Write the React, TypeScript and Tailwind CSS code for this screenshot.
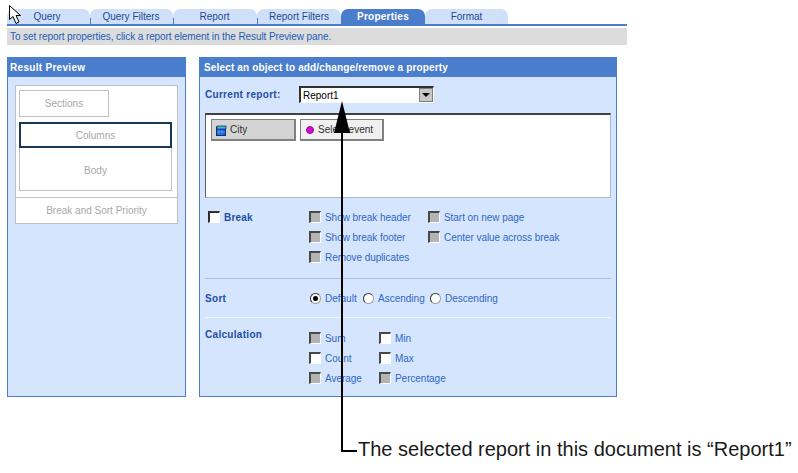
import React from 'react';

const tabs = ['Query', 'Query Filters', 'Report', 'Report Filters', 'Properties', 'Format'];
const tabWidths = ['w-[83px]', 'w-[83px]', 'w-[84px]', 'w-[84px]', 'w-[84px]', 'w-[83px]'];
const tabPads = ['pr-[3px]', 'pr-[1px]', 'pr-[1px]', '', 'pr-0', ''];

const Check: React.FC<{ label: string; off?: boolean; className?: string }> = ({ label, off, className }) => (
  <div className={`flex items-center h-[20px] ${className ?? ''}`}>
    <span
      className={`w-[12px] h-[12px] shrink-0 border-t-2 border-l-2 border-r border-b border-t-[#484848] border-l-[#484848] border-r-white border-b-white ${
        off ? 'bg-[#b4b4b4]' : 'bg-white'
      }`}
    />
    <span className="ml-[4px] text-[10px] tracking-[-0.05px] text-[#2f67c6] whitespace-nowrap">{label}</span>
  </div>
);

const Radio: React.FC<{ label: string; on?: boolean; className?: string }> = ({ label, on, className }) => (
  <div className={`flex items-center h-[20px] ${className ?? ''}`}>
    <span className="w-[11px] h-[11px] shrink-0 rounded-full border border-t-[#303030] border-l-[#303030] border-r-[#a0a0a0] border-b-[#a0a0a0] bg-white flex items-center justify-center">
      {on && <span className="w-[5px] h-[5px] rounded-full bg-black" />}
    </span>
    <span className="ml-[4px] text-[10px] text-[#2f67c6] whitespace-nowrap">{label}</span>
  </div>
);

export default function App() {
  return (
    <div className="relative w-[798px] h-[473px] overflow-hidden bg-white pt-[9px] font-['Liberation_Sans',Arial,sans-serif]">
      {/* tabs */}
      <div className="ml-[7px] w-[620px] border-b-2 border-[#4a7dcc] flex h-[17px]">
        {tabs.map((t, i) => (
          <div
            key={t}
            className={`relative ${tabWidths[i]} ${tabPads[i]} h-[15px] rounded-t-[7px] flex items-center justify-center text-[10px] ${
              t === 'Properties' ? 'bg-[#4a7dcc] text-white font-bold tracking-[0.25px]' : 'bg-[#cfe0f8] text-[#1d4a94]'
            }`}
          >
            {t}
            {i > 0 && i < 4 && <span className="absolute left-0 bottom-0 w-px h-[6px] bg-[#4a7dcc]" />}
          </div>
        ))}
      </div>
      <div className="ml-[7px] mt-[2px] w-[620px] h-[17px] bg-[#dcdcdc] pl-[3px] flex items-center text-[10px] tracking-[-0.09px] text-[#1d5cb8]">
        To set report properties, click a report element in the Result Preview pane.
      </div>

      <div className="ml-[7px] mt-[12px] flex gap-[13px] items-start">
        {/* left panel */}
        <div className="w-[179px] h-[340px] bg-[#d5e5fd] border border-[#4a7dcc] border-t-0">
          <div className="h-[20px] -mx-px bg-[#4a7dcc] text-white font-bold text-[10px] tracking-[0.3px] pl-[3px] flex items-center">
            Result Preview
          </div>
          <div className="mx-[7px] mt-[8px] h-[139px] bg-white border border-[#c0c0c0] text-[10px] text-[#a8a8a8] flex flex-col">
            <div className="flex-1 pl-[3px] pr-[5px] pt-[4px]">
              <div className="w-[90px] h-[27px] border border-[#c0c0c0] flex items-center justify-center">Sections</div>
              <div className="mt-[5px] h-[69px] border border-[#c0c0c0] flex flex-col">
                <div className="-m-px h-[26px] border-2 border-[#17375a] flex items-center justify-center">Columns</div>
                <div className="flex-1 pt-[3px] flex items-center justify-center">Body</div>
              </div>
            </div>
            <div className="h-[26px] border-t border-[#c0c0c0] flex items-center justify-center">Break and Sort Priority</div>
          </div>
        </div>

        {/* right panel */}
        <div className="w-[418px] h-[340px] bg-[#d5e5fd] border border-[#4a7dcc] border-t-0">
          <div className="h-[20px] -mx-px bg-[#4a7dcc] text-white font-bold text-[10px] tracking-[0.15px] pl-[5px] flex items-center">
            Select an object to add/change/remove a property
          </div>
          <div className="px-[5px]">
            <div className="flex items-center h-[17px] mt-[9px]">
              <span className="w-[94px] text-[10px] font-bold tracking-[0.3px] text-[#1d4fa8]">Current report:</span>
              <div className="w-[135px] h-[17px] bg-white border-t-2 border-l-2 border-r border-b border-t-[#303030] border-l-[#303030] border-r-white border-b-white flex items-center pl-[2px] text-[10px] text-black">
                <span className="flex-1">Report1</span>
                <span className="w-[14px] h-[14px] bg-[#c8c8c8] border border-[#808080] flex items-center justify-center">
                  <span className="w-0 h-0 border-x-[4px] border-x-transparent border-t-[4px] border-t-black" />
                </span>
              </div>
            </div>
            <div className="mt-[10px] w-[406px] h-[85px] bg-white border-t-2 border-l border-r border-b border-t-[#404040] border-l-[#606060] border-r-[#a8b8d0] border-b-[#a8b8d0] pt-[4px] pl-[5px] flex items-start gap-[4px] text-[10px] text-[#303030]">
              <div className="w-[85px] h-[22px] bg-[#d4d4d4] border border-[#808080] border-b-2 border-r-2 flex items-center pl-[4px]">
                <svg width="11" height="11" viewBox="0 0 11 11" className="mr-[3px] mt-[1px]">
                  <rect x="0.5" y="2" width="9" height="8.5" fill="#1a5ae0" stroke="#103070" />
                  <path d="M1 1h9v3H1z" fill="#40c0c0" stroke="#103070" strokeWidth="0.8" />
                  <path d="M3 5v5M6 5v5M1 7h8" stroke="#70b0ff" strokeWidth="0.7" />
                </svg>
                City
              </div>
              <div className="w-[84px] h-[22px] bg-[#f0f0f0] border border-[#808080] border-b-2 border-r-2 flex items-center pl-[5px]">
                <span className="w-[8px] h-[8px] rounded-full bg-[#e000e0] border border-[#802080] mr-[4px]" />
                Select event
              </div>
            </div>

            <div className="mt-[9px] flex h-[60px]">
              <div className="w-[104px] pl-[3px]">
                <div className="flex items-center h-[20px]">
                  <span className="w-[12px] h-[12px] border-t-2 border-l-2 border-r border-b border-t-[#303030] border-l-[#303030] border-r-white border-b-white bg-white" />
                  <span className="ml-[4px] text-[10px] font-bold tracking-[0.2px] text-[#1d4fa8]">Break</span>
                </div>
              </div>
              <div className="w-[119px]">
                <Check off label="Show break header" />
                <Check off label="Show break footer" />
                <Check off label="Remove duplicates" />
              </div>
              <div>
                <Check off label="Start on new page" />
                <Check off label="Center value across break" />
              </div>
            </div>
            <div className="mt-[11px] h-px w-[406px] bg-[#a9c4ea]" />
            <div className="mt-[9px] flex items-center h-[20px]">
              <span className="w-[105px] text-[10px] font-bold tracking-[0.3px] text-[#1d4fa8]">Sort</span>
              <Radio on label="Default" className="w-[53px]" />
              <Radio label="Ascending" className="w-[67px]" />
              <Radio label="Descending" />
            </div>
            <div className="mt-[9px] h-px w-[406px] bg-[#eef4ff]" />
            <div className="mt-[10px] flex h-[60px]">
              <span className="w-[104px] pt-[1px] text-[10px] font-bold tracking-[0.3px] text-[#1d4fa8] leading-[12px]">Calculation</span>
              <div className="w-[70px]">
                <Check off label="Sum" />
                <Check label="Count" />
                <Check off label="Average" />
              </div>
              <div>
                <Check label="Min" />
                <Check label="Max" />
                <Check off label="Percentage" />
              </div>
            </div>
          </div>
        </div>
      </div>

      {/* cursor */}
      <svg width="14" height="20" viewBox="0 0 14 20" className="absolute left-[9px] top-[5px]">
        <path d="M0.5 0.5V14.5L4 11.5L7 18.5L10 17L7 10.5H11.5Z" fill="white" stroke="black" />
      </svg>

      {/* annotation */}
      <svg width="30" height="360" viewBox="0 0 30 360" className="absolute left-[332px] top-[100px]">
        <path d="M10 1L18 33H2Z" fill="black" />
        <path d="M10 30V351H25" fill="none" stroke="black" strokeWidth="2" />
      </svg>
      <div className="absolute left-[358px] top-[438px] text-[20px] leading-[22px] text-[#1a1a1a] whitespace-nowrap">
        The selected report in this document is “Report1”
      </div>
    </div>
  );
}
